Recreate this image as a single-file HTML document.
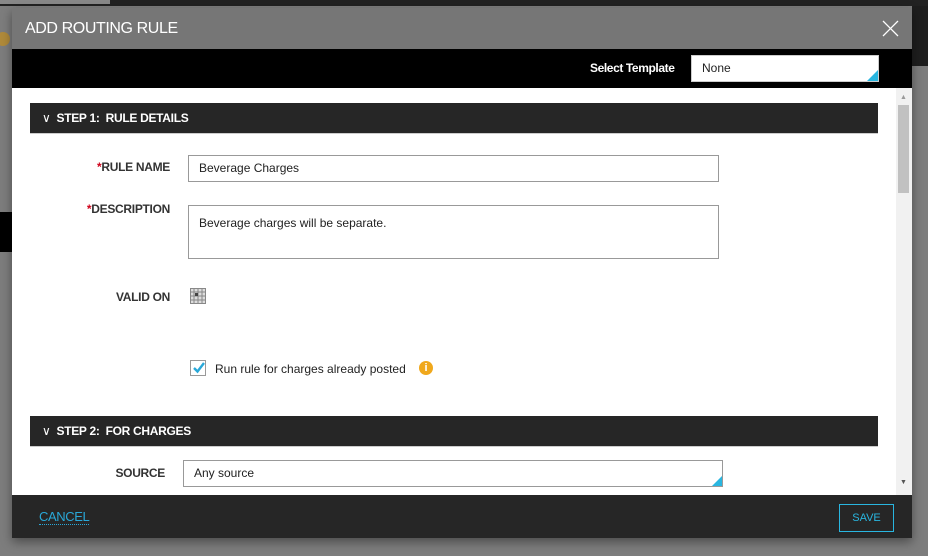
<!DOCTYPE html>
<html><head><style>
*{box-sizing:border-box;margin:0;padding:0}
body{width:928px;height:556px;background:#7d7d7d;font-family:"Liberation Sans",sans-serif;position:relative;overflow:hidden}
.abs{position:absolute}
.lbl{position:absolute;font-size:12px;font-weight:bold;color:#333;text-align:right;letter-spacing:-0.3px}
.req{color:#d0021b}
.inp{position:absolute;border:1px solid #999;background:#fff;font-size:12px;color:#222;padding-left:10px}
.hdr{position:absolute;left:30px;width:848px;height:31px;background:#262626;color:#fff;font-size:12px;font-weight:bold;line-height:31px;padding-left:12px;border-bottom:1px solid #ccc;letter-spacing:-0.3px}
.tri{position:absolute;right:0;bottom:0;width:0;height:0;border-left:11px solid transparent;border-bottom:11px solid #29b6e0}
</style></head><body>
<div class="abs" style="left:0;top:0;width:928px;height:6px;background:#222"></div>
<div class="abs" style="left:0;top:0;width:110px;height:4px;background:#888"></div>
<div class="abs" style="left:912px;top:6px;width:16px;height:60px;background:#1e1e1e"></div>
<div class="abs" style="left:0;top:212px;width:12px;height:40px;background:#000"></div>
<div class="abs" style="left:-4px;top:32px;width:14px;height:14px;border-radius:50%;background:#b08a3a"></div>
<div class="abs" style="left:12px;top:8px;width:900px;height:530px;background:#fff;box-shadow:0 4px 10px rgba(0,0,0,.4)">
 <div class="abs" style="left:0;top:0;width:900px;height:41px;background:#767676;color:#fff;font-size:16px;line-height:41px;padding-left:13px;letter-spacing:-0.4px">ADD ROUTING RULE</div>
 <svg class="abs" style="left:870px;top:12px" width="17" height="17"><path d="M1 1L16 16M16 1L1 16" stroke="#fff" stroke-width="1.3"/></svg>
 <div class="abs" style="left:0;top:41px;width:900px;height:39px;background:#000"></div>
 <div class="abs" style="left:578px;top:53px;color:#fff;font-size:12px;font-weight:bold;letter-spacing:-0.4px">Select Template</div>
 <div class="inp" style="left:679px;top:47px;width:188px;height:27px;line-height:25px;border-color:#ccc">None<div class="tri"></div></div>
 <div class="abs" style="left:884px;top:80px;width:16px;height:407px;background:#f1f1f1"></div>
 <div class="abs" style="left:886px;top:97px;width:11px;height:88px;background:#c1c1c1"></div>
 <div class="abs" style="left:888px;top:86px;font-size:7px;color:#999">▲</div>
 <div class="abs" style="left:888px;top:471px;font-size:7px;color:#555">▼</div>
 <div class="abs" style="left:0;top:487px;width:900px;height:43px;background:#262626"></div>
 <div class="abs" style="left:27px;top:502px;color:#29a8d8;font-size:13px;border-bottom:1px dotted #29a8d8;line-height:14px;letter-spacing:-0.4px">CANCEL</div>
 <div class="abs" style="left:827px;top:496px;width:55px;height:28px;border:1px solid #29b6e0;color:#29b6e0;font-size:11px;text-align:center;line-height:26px">SAVE</div>
</div>
<div class="hdr" style="top:103px"><span style="font-weight:normal;margin-right:6px">&#8744;</span>STEP 1:&nbsp; RULE DETAILS</div>
<div class="lbl" style="left:60px;width:110px;top:160px"><span class="req">*</span>RULE NAME</div>
<div class="inp" style="left:188px;top:155px;width:531px;height:27px;line-height:25px">Beverage Charges</div>
<div class="lbl" style="left:60px;width:110px;top:202px"><span class="req">*</span>DESCRIPTION</div>
<div class="inp" style="left:188px;top:205px;width:531px;height:54px;padding-top:10px">Beverage charges will be separate.</div>
<div class="lbl" style="left:60px;width:110px;top:290px">VALID ON</div>
<svg class="abs" style="left:190px;top:288px" width="16" height="16"><rect x="0.5" y="0.5" width="15" height="15" fill="#ddd" stroke="#888"/><path d="M0 4H16M0 8H16M0 12H16M4 0V16M8 0V16M12 0V16" stroke="#888"/><rect x="5" y="5" width="3" height="3" fill="#444"/></svg>
<div class="abs" style="left:190px;top:360px;width:16px;height:16px;border:1px solid #999;background:#fff"></div>
<svg class="abs" style="left:192px;top:361px" width="14" height="13"><path d="M2 7L5.5 10.5L12 2" stroke="#29a8d8" stroke-width="2.4" fill="none"/></svg>
<div class="abs" style="left:215px;top:362px;font-size:12px;color:#222">Run rule for charges already posted</div>
<div class="abs" style="left:419px;top:361px;width:14px;height:14px;border-radius:50%;background:#f0a81c;color:#fff;font-size:11px;font-weight:bold;text-align:center;line-height:14px">i</div>
<div class="hdr" style="top:416px"><span style="font-weight:normal;margin-right:6px">&#8744;</span>STEP 2:&nbsp; FOR CHARGES</div>
<div class="lbl" style="left:60px;width:105px;top:466px">SOURCE</div>
<div class="inp" style="left:183px;top:460px;width:540px;height:27px;line-height:25px">Any source<div class="tri" style="border-left-width:10px;border-bottom-width:10px"></div></div>
</body></html>
